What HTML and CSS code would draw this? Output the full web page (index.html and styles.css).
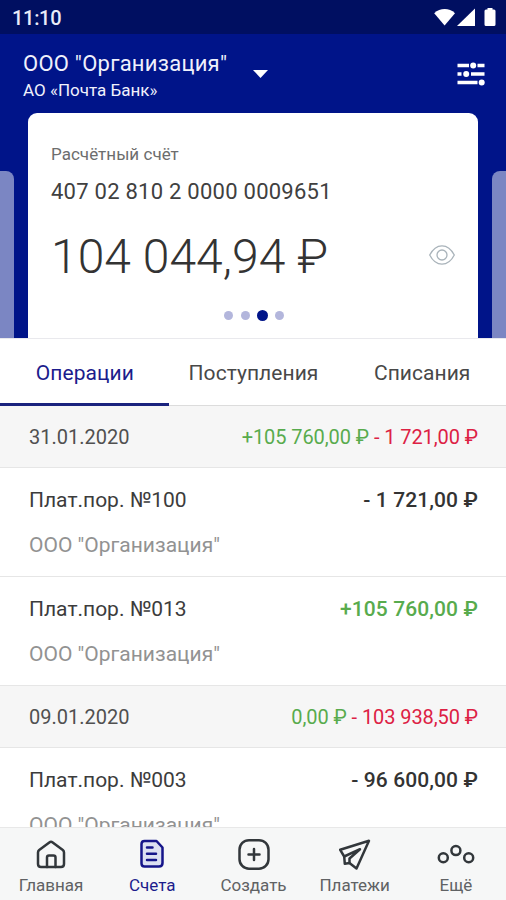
FILE: index.html
```html
<!DOCTYPE html>
<html lang="ru">
<head>
<meta charset="utf-8">
<meta name="viewport" content="width=device-width">
<title>Счета</title>
<link rel="stylesheet" href="styles.css">
</head>
<body>
<div class="app">
  <div class="status">
    <span class="clock">11:10</span>
    <svg class="status-icons" width="64" height="20" viewBox="0 0 64 20">
      <path d="M1.2 5.2C7.200-.3 16.200-.3 22 5.200L11.600 17.600Z"/>
      <path d="M24 18 42 0.500V18Z"/>
      <path d="M54.500 0h5v1.500h1.500q1.500 0 1.500 1.500v13.500q0 1.500-1.500 1.500h-8q-1.500 0-1.500-1.500v-13.500q0-1.500 1.500-1.500h1.500z"/>
    </svg>
  </div>
  <header class="header">
    <div class="company">
      <div class="company-name">ООО "Организация"</div>
      <div class="bank-name">АО «Почта Банк»</div>
    </div>
    <svg class="caret" width="15" height="8" viewBox="0 0 15 8"><path d="M0 0h15L7.500 8z"/></svg>
    <svg class="filters" width="28" height="24" viewBox="0 0 28 24">
      <path d="M.5 3.500H12M20.500 3.500H27.500M.5 12H4.500M14 12H27.500M.5 20.500H20.500"/>
      <circle cx="16.200" cy="3.500" r="3"/><circle cx="9.200" cy="12" r="3"/><circle cx="24.700" cy="20.500" r="3"/>
    </svg>
  </header>
  <section class="carousel">
    <div class="peek peek-left"></div>
    <article class="card">
      <div class="card-label">Расчётный счёт</div>
      <div class="card-number">407 02 810 2 0000 0009651</div>
      <div class="card-balance">
        <span class="balance">104 044,94 ₽</span>
        <svg class="eye" width="26" height="20" viewBox="0 0 26 20">
          <path d="M.7 10C7-2.300 19-2.300 25.300 10C19 22.300 7 22.300.7 10Z"/>
          <circle cx="13" cy="10" r="5"/>
        </svg>
      </div>
      <div class="dots"><i class="dot"></i><i class="dot"></i><i class="dot dot-on"></i><i class="dot"></i></div>
    </article>
    <div class="peek peek-right"></div>
  </section>
  <nav class="tabs">
    <div class="tab tab-on">Операции</div>
    <div class="tab">Поступления</div>
    <div class="tab">Списания</div>
  </nav>
  <main class="list">
    <div class="day"><span>31.01.2020</span><span class="sums"><span class="plus">+105 760,00 ₽</span> <span class="minus">- 1 721,00 ₽</span></span></div>
    <div class="op">
      <div class="op-top"><span class="op-name">Плат.пор. №100</span><span class="sum">- 1 721,00 ₽</span></div>
      <div class="op-org">ООО "Организация"</div>
    </div>
    <div class="op">
      <div class="op-top"><span class="op-name">Плат.пор. №013</span><span class="sum plus">+105 760,00 ₽</span></div>
      <div class="op-org">ООО "Организация"</div>
    </div>
    <div class="day"><span>09.01.2020</span><span class="sums"><span class="plus">0,00 ₽</span> <span class="minus">- 103 938,50 ₽</span></span></div>
    <div class="op">
      <div class="op-top"><span class="op-name">Плат.пор. №003</span><span class="sum">- 96 600,00 ₽</span></div>
      <div class="op-org">ООО "Организация"</div>
    </div>
  </main>
  <nav class="bottom">
    <div class="item">
      <svg width="34" height="34" viewBox="0 0 34 34"><path d="M4 14.500Q4 13 5.200 12L15.300 4.400Q17 3.200 18.700 4.400L28.800 12Q30 13 30 14.500V26Q30 29 27 29H7Q4 29 4 26Z"/><path d="M13 29V19.500Q13 17.500 15 17.500H19.500Q21.500 17.500 21.500 19.500V29"/></svg>
      <span>Главная</span>
    </div>
    <div class="item item-on">
      <svg width="34" height="34" viewBox="0 0 34 34"><path d="M9.500 3H21.500L27.500 9.500V25Q27.500 28.500 24 28.500H9.500Q6.500 28.500 6.500 25.500V6Q6.500 3 9.500 3Z"/><path d="M12 9.500H17.500M12 15.700H21M12 21.900H21"/></svg>
      <span>Счета</span>
    </div>
    <div class="item">
      <svg width="34" height="34" viewBox="0 0 34 34"><rect x="2.500" y="2.200" width="29" height="28.500" rx="9.500"/><path d="M17 11V22M11.500 16.500H22.500"/></svg>
      <span>Создать</span>
    </div>
    <div class="item">
      <svg width="34" height="34" viewBox="0 0 34 34"><path d="M31 2.800 2.200 11.800 6.200 18.500 6.800 25.800 11.500 25 18.500 30.500Z"/><path d="M6.200 18.500 22 11.200 11.500 20.500V25"/></svg>
      <span>Платежи</span>
    </div>
    <div class="item">
      <svg class="more" width="40" height="34" viewBox="0 0 40 34"><circle cx="7.300" cy="19.700" r="4.500"/><circle cx="19.900" cy="12.600" r="4.500"/><circle cx="32.700" cy="19.700" r="4.500"/></svg>
      <span>Ещё</span>
    </div>
  </nav>
</div>
</body>
</html>
```
FILE: styles.css
```css
* { box-sizing: border-box; }
body { margin: 0; font-family: Roboto, "Noto Sans", sans-serif; color: #333; }
.app { width: 506px; height: 900px; display: flex; flex-direction: column; overflow: hidden; background: #fff; }
svg { display: block; flex: none; }

.status { height: 34px; background: #000f61; display: flex; align-items: flex-start; justify-content: space-between; padding: 8px 9px 0 12px; color: #e9ebf8; }
.clock { font-size: 20px; line-height: 21px; font-weight: 500; letter-spacing: -.3px; }
.status-icons { fill: #fff; }

.header { height: 79px; flex: none; background: #001489; color: #f0f1fc; display: flex; align-items: flex-start; padding: 16px 21px 0 23px; }
.company { width: 230px; white-space: nowrap; }
.company-name { font-size: 22px; line-height: 27px; letter-spacing: .25px; }
.bank-name { font-size: 17px; line-height: 20px; margin-top: 3px; }
.caret { margin-top: 20px; fill: #fff; }
.filters { margin: 12px 0 0 auto; fill: #fff; stroke: #fff; stroke-width: 3.600; }
.filters circle { stroke: none; }

.carousel { height: 225px; flex: none; background: #001489; display: flex; justify-content: space-between; align-items: flex-end; }
.peek { width: 14px; height: 167px; background: #7b86c3; }
.peek-left { border-radius: 0 8px 0 0; }
.peek-right { border-radius: 8px 0 0 0; }
.card { width: 450px; height: 225px; background: #fff; border-radius: 9px 9px 0 0; padding: 30px 23px 0; }
.card-label { font-size: 17px; line-height: 22px; color: #6d6d6d; letter-spacing: .03px; }
.card-number { font-size: 22px; line-height: 26px; margin-top: 14px; letter-spacing: .25px; white-space: nowrap; color: #404040; }
.card-balance { display: flex; justify-content: space-between; align-items: center; height: 56px; margin-top: 24px; }
.balance { font-size: 48px; line-height: 56px; font-weight: 300; white-space: nowrap; letter-spacing: .05px; }
.eye { fill: none; stroke: #a9b3ba; stroke-width: 1.300; margin-top: -4px; }
.dots { display: flex; justify-content: center; align-items: center; gap: 8px; height: 12px; margin: 24px 0 0 2px; }
.dot { width: 9px; height: 9px; border-radius: 50%; background: #b3b6dc; }
.dot-on { width: 11px; height: 11px; margin: 0 -1px; background: #001489; }

.tabs { height: 68px; flex: none; display: flex; border-top: 1px solid #e9e9ed; border-bottom: 1px solid #dcdcdc; }
.tab { flex: 1; height: 67px; text-align: center; font-size: 21px; line-height: 68px; letter-spacing: .05px; padding-left: 1px; color: #484848; white-space: nowrap; }
.tab-on { color: #1c1c8c; border-bottom: 3px solid #1a237e; }

.list { flex: 1; min-height: 0; overflow: hidden; }
.day { height: 62px; display: flex; justify-content: space-between; align-items: center; padding: 0 28px 0 29px; font-size: 20px; background: #f6f6f6; border-bottom: 1px solid #e6e6e6; color: #505050; white-space: nowrap; }
.sums { letter-spacing: -.08px; }
.plus { color: #58ab4d; }
.minus { color: #dd2144; }
.op { height: 109px; padding: 19px 28px 0 29px; border-bottom: 1px solid #e6e6e6; }
.op-top { display: flex; justify-content: space-between; font-size: 21px; line-height: 26px; white-space: nowrap; }
.op-name { color: #3c3c3c; }
.sum { font-weight: 500; letter-spacing: .1px; }
.op-org { font-size: 21px; line-height: 26px; margin-top: 19px; color: #929292; }

.bottom { height: 73px; flex: none; display: flex; background: #f6f7f7; border-top: 1px solid #e8e8e8; }
.item { flex: 1; display: flex; flex-direction: column; align-items: center; padding: 10px 0 0 1px; font-size: 17px; line-height: 20px; color: #606264; }
.item span { margin-top: 3px; }
.item svg { fill: none; stroke: #32373b; stroke-width: 2.500; stroke-linejoin: round; stroke-linecap: round; }
.item-on { color: #1c1c8c; }
.item-on svg { stroke: #15158a; fill: #dce0f2; }
```
